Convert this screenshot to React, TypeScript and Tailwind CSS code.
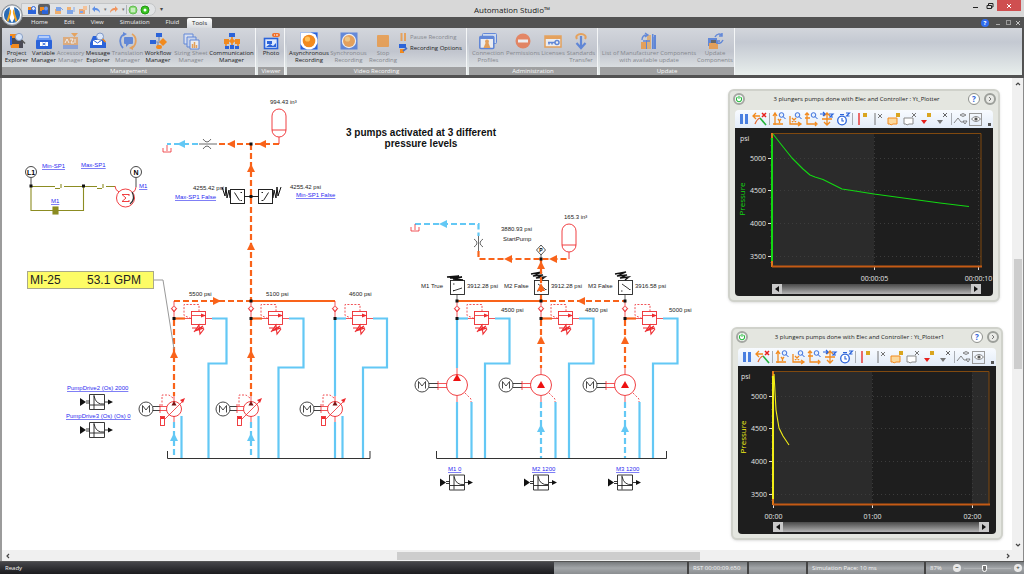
import React from "react";

const BLUE = "#2b63d9";
const ORANGE = "#f28a1e";
const HOT = "#f9631a";
const COLD = "#63c8f5";
const RED = "#ee2a2e";

/* ------------------------------------------------------------------ */
/* Ribbon icons                                                        */
/* ------------------------------------------------------------------ */

const ribbonIcons: Record<string, React.ReactNode> = {
  project: (
    <>
      <path d="M2 2h7v5H2z" fill={ORANGE} />
      <path d="M2 6h6l1 2h6v8H3z" fill="#4a4a55" />
      <path d="M3 12h8v4H3z" fill={ORANGE} />
      <path d="M2 4h2v9H2z" fill={BLUE} />
      <circle cx="11" cy="5" r="3.6" fill="#d5e4fa" stroke="#8aa0c4" />
      <path d="M13.500 8l3.500 3.500" stroke="#555" strokeWidth="1.600" />
    </>
  ),
  variable: (
    <>
      <path d="M3 3h12l2 6H1z" fill="#6c9bf2" />
      <rect x="1" y="8" width="16" height="9" rx="1" fill={BLUE} />
      <path d="M4 5h10" stroke="#fff" />
      <rect x="5" y="10" width="8" height="4" fill="#fff" />
      <path d="M7.500 11l3 2m0-2l-3 2" stroke={BLUE} strokeWidth="0.900" />
    </>
  ),
  accessory: (
    <>
      <path d="M9 1h7l-3.500 4z" fill={ORANGE} />
      <rect x="1" y="5" width="15" height="12" fill="#e79a50" />
      <rect x="1" y="13" width="15" height="4" fill="#7090d8" />
      <path d="M3 11l2-4 2 4M8 7h3l-2 4h3M13 7v4" fill="none" stroke="#fff" />
    </>
  ),
  message: (
    <>
      <path d="M4 4h9l4 7v5H1v-5z" fill={BLUE} />
      <path d="M4 8h9v5H4z" fill="#fff" />
      <path d="M4 8l4.500 3L13 8" stroke={BLUE} fill="none" />
      <circle cx="11" cy="4.500" r="3.500" fill="#dce8fb" stroke="#7f98c6" />
      <path d="M13.500 7l3 3" stroke={ORANGE} strokeWidth="1.600" />
    </>
  ),
  translation: (
    <>
      <rect x="5" y="5" width="9" height="7" rx="1" fill={BLUE} />
      <path d="M7 12v3l3-3" fill={BLUE} />
      <path d="M6 2C0 4 0 12 4 16" stroke={BLUE} strokeWidth="1.800" fill="none" />
      <path d="M4 0l4 2-4 2.500z" fill={BLUE} />
      <path d="M13 2c5 3 5 10 0 14" stroke={ORANGE} strokeWidth="1.800" fill="none" />
      <path d="M14 13.500l-4 2.500 4 2z" fill={ORANGE} />
    </>
  ),
  workflow: (
    <>
      <path d="M10 4v5M4 10h9M9 10v5" stroke="#7b8fb8" strokeWidth="1.200" fill="none" />
      <rect x="7" y="1" width="6" height="4" fill={BLUE} />
      <rect x="1" y="8" width="6" height="4" fill={BLUE} />
      <path d="M14 6l4 4-4 4-4-4z" fill={ORANGE} />
      <rect x="7" y="13" width="6" height="4" rx="2" fill={ORANGE} />
    </>
  ),
  sizing: (
    <>
      <path d="M2 2h9v10H2z" fill="#dfe8fb" stroke={BLUE} />
      <path d="M5 5h9v10H5z" fill="#c8d8f8" stroke={BLUE} />
      <path d="M8 8h9v9H8z" fill="#fff" stroke={BLUE} />
      <path d="M10.500 16v-4M12.500 16v-6M14.500 16v-3" stroke={ORANGE} strokeWidth="1.500" />
    </>
  ),
  communication: (
    <>
      <path d="M9 3v6M3 9h12M3 9v6M15 9v6M9 9v6" stroke={ORANGE} strokeWidth="1.600" fill="none" />
      <rect x="6" y="1" width="6" height="4" fill={BLUE} />
      <path d="M1 7h5v5H1zM12 7h5v5h-5z" fill={ORANGE} />
      <circle cx="9" cy="9" r="2.200" fill={ORANGE} />
      <path d="M2 14h4v3H2zM7 13h4v4H7zM12 14h4v3h-4z" fill={BLUE} />
    </>
  ),
  photo: (
    <>
      <rect x="2.500" y="6.500" width="13" height="10" fill="#dfeafd" stroke={BLUE} strokeWidth="1.600" />
      <path d="M5 9h5v3H5zM4 15l4-3 3 2 3-3v4z" fill={BLUE} />
      <rect x="10" y="1" width="8" height="4" rx="2" fill="#f0702a" />
      <path d="M12 3h1M14 3h2" stroke="#fff" />
    </>
  ),
  async: (
    <>
      <rect x="0.500" y="0.500" width="17" height="17" fill="#fff" stroke="#a9c2ee" />
      <path d="M17.500 .5v7l-2-5-5-2zM17.500 11v6.500H11l4-2zM.5 12v5.500H7l-4-2z" fill={BLUE} />
      <circle cx="9" cy="9" r="6.300" fill={ORANGE} />
      <circle cx="7.500" cy="7" r="2.600" fill="#ffc25c" />
    </>
  ),
  sync: (
    <>
      <rect x="0.500" y="0.500" width="17" height="17" fill={BLUE} />
      <circle cx="9" cy="9" r="7.200" fill="#fff" />
      <circle cx="9" cy="9" r="6" fill={ORANGE} />
      <circle cx="7.500" cy="7" r="2.600" fill="#ffc25c" />
    </>
  ),
  stop: <rect x="3" y="3" width="12" height="12" rx="1" fill={ORANGE} />,
  profiles: (
    <>
      <rect x="3.500" y="1.500" width="14" height="10" rx="1" fill="#cfe0fb" stroke={BLUE} />
      <rect x="0.800" y="4.500" width="14" height="12" rx="1" fill="#fff" stroke={BLUE} strokeWidth="1.600" />
      <path d="M1 4h14v3H1z" fill={BLUE} />
      <circle cx="8" cy="9.500" r="2" fill={ORANGE} />
      <path d="M6.500 11h3l2 5h-7z" fill={ORANGE} />
    </>
  ),
  permissions: (
    <>
      <circle cx="9" cy="9" r="7.500" fill="#f0602a" />
      <rect x="4" y="7.500" width="10" height="3" fill="#fff" />
    </>
  ),
  licenses: (
    <>
      <rect x="1" y="4" width="16" height="11" fill="#fff" stroke={ORANGE} strokeWidth="1.500" />
      <path d="M1 4h16v3H1z" fill={ORANGE} />
      <circle cx="13" cy="10.500" r="2" fill="none" stroke={BLUE} strokeWidth="1.500" />
      <path d="M11 10.500H4M5 10.500v2M8 10.500v2" stroke={BLUE} strokeWidth="1.500" />
    </>
  ),
  transfer: (
    <>
      <path d="M5 7C3 4 6 2 9 2s6 2 4 5" fill="none" stroke={ORANGE} strokeWidth="2" />
      <path d="M9 4v12M4.500 11l4.500 5 4.500-5" fill="none" stroke={BLUE} strokeWidth="2.200" />
    </>
  ),
  manufacturer: (
    <>
      <path d="M1 10h6v7H1z" fill={ORANGE} />
      <path d="M6 8h5v9H6zM12 2h1.500v15H12zM14 3h2v14h-2z" fill={BLUE} />
      <path d="M7 3h4v14H7z" fill="#e7a049" />
      <path d="M2 8c0-4 2-5 5-5M5 1l3 2-3 2M13 5v12M10 9H3" stroke={BLUE} strokeWidth="1.300" fill="none" />
    </>
  ),
  update: (
    <>
      <path d="M2 6h9v8H2z" fill={BLUE} />
      <path d="M3 11h9v6H3z" fill={ORANGE} />
      <path d="M5 8h5v3H5z" fill="#333" />
      <path d="M9 5c2-4 5-3 7-2M16 1v3h-3M17 8c-2 4-5 4-6 2M11 12V9h3" stroke={BLUE} strokeWidth="1.500" fill="none" />
    </>
  ),
};

function RibbonButton({
  icon,
  lines,
  disabled,
  width,
}: {
  icon: string;
  lines: string[];
  disabled?: boolean;
  width: string;
}) {
  return (
    <button
      type="button"
      disabled={disabled}
      className={`flex shrink-0 flex-col items-center whitespace-nowrap ${width} ${
        disabled ? "text-[#85888e]" : "font-medium text-[#1c1c1c]"
      }`}
    >
      <svg viewBox="0 0 18 18" className={`h-[18px] w-[18px] ${disabled ? "opacity-65" : ""}`} aria-hidden="true">
        {ribbonIcons[icon]}
      </svg>
      {lines.map((line) => (
        <span key={line} className="block leading-[7px]">
          {line}
        </span>
      ))}
    </button>
  );
}

function RibbonGroup({ title, children }: { title: string; children: React.ReactNode }) {
  return (
    <section className="mr-[2px] flex flex-col border-r border-[#f4f6f7] bg-linear-to-b from-[#d3d6dc] via-[#c1c5ce] to-[#e6eaea]">
      <div className="flex flex-1 items-start px-px pt-1">{children}</div>
      <h2 className="bg-[#9fa0a1] text-center leading-[8px] font-medium text-[#f8f8f8]">{title}</h2>
    </section>
  );
}

/* ------------------------------------------------------------------ */
/* Title bar, tabs and ribbon                                          */
/* ------------------------------------------------------------------ */

function QuickIcon({ label, children, active }: { label: string; children: React.ReactNode; active?: boolean }) {
  return (
    <button
      type="button"
      aria-label={label}
      className={`flex h-[11px] w-3 items-center justify-center ${active ? "rounded-xs bg-[#5d5f63]" : ""}`}
    >
      <svg viewBox="0 0 10 10" className="h-[10px] w-[10px]" aria-hidden="true">
        {children}
      </svg>
    </button>
  );
}

function TitleBar() {
  return (
    <header className="relative flex h-[17px] shrink-0 justify-between bg-[#d8d8d8]">
      <div className="flex items-start pt-[3px] pl-[21px]">
        <div className="flex h-[13px] items-center rounded-r-full border border-[#c3c5c7] bg-[#e1e3e5] pr-1 pl-1">
          <QuickIcon label="Project Explorer">
            <path d="M1 2h4v3H1z" fill={ORANGE} />
            <path d="M1 5h8v4H1z" fill={BLUE} />
            <circle cx="6.500" cy="3.500" r="2" fill="#dce8fb" stroke={BLUE} />
          </QuickIcon>
          <QuickIcon label="Component library" active>
            <path d="M1 2h4v4H1z" fill={ORANGE} />
            <path d="M3 5h6v4H3z" fill={BLUE} />
            <circle cx="7" cy="3.500" r="2" fill="#6f9cf0" />
          </QuickIcon>
          <span className="w-[3px]" />
          <QuickIcon label="New">
            <path d="M1 4h6v5H1z" fill="#f0b070" />
            <path d="M2 2h5v4H2z" fill="#7ea5e8" />
            <path d="M7 3l2 2" stroke="#7ea5e8" />
          </QuickIcon>
          <QuickIcon label="Open">
            <path d="M1 5h6v4H1z" fill="#7ea5e8" />
            <path d="M1 2h4v3H1z" fill="#f0b070" />
            <path d="M8 2v5" stroke="#7ea5e8" />
          </QuickIcon>
          <QuickIcon label="Save">
            <path d="M1 4h6v5H1z" fill="#e9a878" />
            <path d="M5 1h4v4H5z" fill="#f4c39a" />
            <path d="M2 6h3v2H2z" fill="#7ea5e8" />
          </QuickIcon>
          <span className="h-[9px] w-px bg-[#b0b2b5]" />
          <QuickIcon label="Undo">
            <path d="M4 1L1 4l3 3V5c2 0 4 1 5 3 0-3-2-5-5-5z" fill="#5d8fe6" />
          </QuickIcon>
          <span className="w-[6px] text-center text-[5px] leading-none text-[#777]">▾</span>
          <QuickIcon label="Redo">
            <path d="M6 1l3 3-3 3V5C4 5 2 6 1 8c0-3 2-5 5-5z" fill="#f0935c" />
          </QuickIcon>
          <span className="w-[6px] text-center text-[5px] leading-none text-[#777]">▾</span>
          <span className="h-[9px] w-px bg-[#b0b2b5]" />
          <QuickIcon label="Run">
            <circle cx="5" cy="5" r="4" fill="#8fdc7c" stroke="#62bc50" />
            <path d="M4 3v4M6 3v4" stroke="#fff" />
          </QuickIcon>
          <QuickIcon label="Stop">
            <circle cx="5" cy="5" r="4" fill="#39c422" stroke="#219a10" />
            <circle cx="5" cy="5" r="1.500" fill="#fff" />
          </QuickIcon>
        </div>
        <span className="ml-1 text-[6px] leading-[12px] text-[#444]">▾</span>
      </div>
      <h1 className="pointer-events-none absolute inset-x-0 top-[4px] text-center text-[8px] leading-[12px] text-[#222]">
        Automation Studio™
      </h1>
      <div className="flex h-[11px] items-stretch pr-[3px]">
        <button type="button" aria-label="Minimize" className="flex w-[13px] items-center justify-center">
          <span className="mt-1 h-px w-[5px] bg-[#222]" />
        </button>
        <button type="button" aria-label="Restore" className="flex w-[15px] items-center justify-center">
          <svg viewBox="0 0 8 8" className="h-2 w-2" aria-hidden="true">
            <path d="M1 3.500h4.500v3H1zM2.500 3V1.500H7v3.500H5.500" fill="none" stroke="#222" />
          </svg>
        </button>
        <button type="button" aria-label="Close" className="flex w-[24px] items-center justify-center bg-[#cf4f50]">
          <svg viewBox="0 0 6 6" className="h-[6px] w-[6px]" aria-hidden="true">
            <path d="M1 1l4 4M5 1L1 5" stroke="#fff" />
          </svg>
        </button>
      </div>
      <svg viewBox="0 0 22 22" className="absolute top-[4px] left-[1px] z-10 h-[22px] w-[22px]" aria-hidden="true">
        <circle cx="11" cy="11" r="10.300" fill="#c9ced4" stroke="#8d9298" />
        <circle cx="11" cy="11" r="8.600" fill="#2c6cb4" stroke="#fff" />
        <path d="M11 3l2 0 1 10-3 6-3-6 1-10z" fill="#fff" />
        <path d="M9.500 5L5.500 17l2 .8L10.500 8zM12.500 5l4 12-2 .8L11.500 8z" fill="#f4a823" />
        <path d="M11 5v12" stroke="#fff" strokeWidth="1.400" />
      </svg>
    </header>
  );
}

function TabBar() {
  const tabs = ["Home", "Edit", "View", "Simulation", "Fluid"];
  return (
    <nav className="flex h-[11px] shrink-0 items-stretch justify-between bg-[#525252] pr-[1px] pl-[23px]">
      <div className="flex items-stretch">
        {tabs.map((tab) => (
          <button key={tab} type="button" className="px-2 font-medium leading-[11px] text-[#efefef]">
            {tab}
          </button>
        ))}
        <button
          type="button"
          className="mt-px rounded-t-xs bg-linear-to-b from-white to-[#d7dade] px-[5px] font-medium leading-[10px] text-[#222]"
        >
          Tools
        </button>
      </div>
      <div className="flex items-center">
        <button
          type="button"
          aria-label="Help"
          className="mr-1 flex h-2 w-2 items-center justify-center rounded-full bg-[#2f6df0] leading-none font-bold text-white"
        >
          ?
        </button>
        <button type="button" aria-label="Minimize document" className="flex w-[10px] justify-center">
          <span className="mt-1 h-px w-1 bg-[#aaa]" />
        </button>
        <button type="button" aria-label="Restore document" className="flex w-[10px] justify-center">
          <span className="h-[5px] w-[5px] border border-[#9a9a9a]" />
        </button>
        <button type="button" aria-label="Close document" className="flex w-[10px] justify-center">
          <svg viewBox="0 0 6 6" className="h-[6px] w-[6px]" aria-hidden="true">
            <path d="M1 1l4 4M5 1L1 5" stroke="#c4c4c4" />
          </svg>
        </button>
      </div>
    </nav>
  );
}

function Ribbon() {
  return (
    <div className="flex h-[50px] shrink-0 border-x-2 border-b-3 border-[#525252] bg-linear-to-b from-[#d3d6dc] via-[#c4c9d2] via-30% to-[#e8eeec]">
      <RibbonGroup title="Management">
        <RibbonButton icon="project" lines={["Project", "Explorer"]} width="w-[27px]" />
        <RibbonButton icon="variable" lines={["Variable", "Manager"]} width="w-[27px]" />
        <RibbonButton icon="accessory" lines={["Accessory", "Manager"]} width="w-[27px]" disabled />
        <RibbonButton icon="message" lines={["Message", "Explorer"]} width="w-[28px]" />
        <RibbonButton icon="translation" lines={["Translation", "Manager"]} width="w-[31px]" disabled />
        <RibbonButton icon="workflow" lines={["Workflow", "Manager"]} width="w-[30px]" />
        <RibbonButton icon="sizing" lines={["Sizing Sheet", "Manager"]} width="w-[36px]" disabled />
        <RibbonButton icon="communication" lines={["Communication", "Manager"]} width="w-[45px]" />
      </RibbonGroup>
      <RibbonGroup title="Viewer">
        <RibbonButton icon="photo" lines={["Photo"]} width="w-[24px]" />
      </RibbonGroup>
      <RibbonGroup title="Video Recording">
        <RibbonButton icon="async" lines={["Asynchronous", "Recording"]} width="w-[42px]" />
        <RibbonButton icon="sync" lines={["Synchronous", "Recording"]} width="w-[37px]" disabled />
        <RibbonButton icon="stop" lines={["Stop", "Recording"]} width="w-[32px]" disabled />
        <div className="flex w-[66px] flex-col">
          <button type="button" disabled className="flex h-[10px] items-center gap-[3px] whitespace-nowrap text-[#85888e]">
            <svg viewBox="0 0 8 8" className="h-2 w-2 opacity-65" aria-hidden="true">
              <path d="M1.500 0h2v8h-2zM5 0h2v8H5z" fill={ORANGE} />
            </svg>
            Pause Recording
          </button>
          <button type="button" className="flex h-[12px] items-center gap-[2px] whitespace-nowrap font-medium text-[#1c1c1c]">
            <svg viewBox="0 0 9 9" className="h-[9px] w-[9px]" aria-hidden="true">
              <path d="M0 0h7v4H0z" fill={BLUE} />
              <path d="M1 5h4v4H1z" fill={ORANGE} />
              <path d="M4 7l4-3" stroke="#4a6fc0" strokeWidth="1.600" />
            </svg>
            Recording Options
          </button>
        </div>
      </RibbonGroup>
      <RibbonGroup title="Administration">
        <RibbonButton icon="profiles" lines={["Connection", "Profiles"]} width="w-[36px]" disabled />
        <RibbonButton icon="permissions" lines={["Permissions"]} width="w-[34px]" disabled />
        <RibbonButton icon="licenses" lines={["Licenses"]} width="w-[26px]" disabled />
        <RibbonButton icon="transfer" lines={["Standards", "Transfer"]} width="w-[30px]" disabled />
      </RibbonGroup>
      <RibbonGroup title="Update">
        <RibbonButton
          icon="manufacturer"
          lines={["List of Manufacturer Components", "with available update"]}
          width="w-[96px]"
          disabled
        />
        <RibbonButton icon="update" lines={["Update", "Components"]} width="w-[36px]" disabled />
      </RibbonGroup>
    </div>
  );
}

/* ------------------------------------------------------------------ */
/* Hydraulic diagram                                                   */
/* ------------------------------------------------------------------ */

type LineProps = { d: string; color?: string; dashed?: boolean };

function Pipe({ d, color = HOT, dashed }: LineProps) {
  return <path d={d} fill="none" stroke={color} strokeWidth="2.200" strokeDasharray={dashed ? "6 3" : undefined} />;
}

function Thin({ d, color = RED, dashed }: LineProps) {
  return <path d={d} fill="none" stroke={color} strokeWidth="0.800" strokeDasharray={dashed ? "2 1.500" : undefined} />;
}

function Arrow({ x, y, dir, color = HOT }: { x: number; y: number; dir: "up" | "left" | "right"; color?: string }) {
  const d =
    dir === "up"
      ? `M${x - 4} ${y + 4}h8l-4-8z`
      : dir === "left"
        ? `M${x + 4} ${y - 4}v8l-8-4z`
        : `M${x - 4} ${y - 4}v8l8-4z`;
  return <path d={d} fill={color} />;
}

function Node({ x, y }: { x: number; y: number }) {
  return <rect x={x - 1.5} y={y - 1.5} width="3" height="3" fill="#111" />;
}

function Label({ x, y, children }: { x: number; y: number; children: string }) {
  return (
    <text x={x} y={y} fontSize="6" fill="#222">
      {children}
    </text>
  );
}

function TagLink({ x, y, children }: { x: number; y: number; children: string }) {
  return (
    <a href="#tag">
      <text x={x} y={y} fontSize="6" fill="#2a2af0" textDecoration="underline">
        {children}
      </text>
    </a>
  );
}

function Drain({ x, y }: { x: number; y: number }) {
  return <Thin d={`M${x} ${y}v6M${x - 4} ${y + 3}v4h8v-4`} />;
}

function Accumulator({ x, y }: { x: number; y: number }) {
  return (
    <g fill="#fff" stroke={RED} strokeWidth="0.900">
      <rect x={x - 7} y={y} width="14" height="28" rx="7" />
      <path d={`M${x - 7} ${y + 21}h14M${x} ${y + 28}v7`} />
    </g>
  );
}

function Motor({ x, y }: { x: number; y: number }) {
  return (
    <g fill="none" stroke="#333" strokeWidth="0.900">
      <circle cx={x} cy={y} r="7" />
      <path d={`M${x - 3.5} ${y + 3.5}v-7l3.500 4.500 3.500-4.500v7`} />
    </g>
  );
}

function ReliefValve({ x, coldInlet, coldPath }: { x: number; coldInlet?: boolean; coldPath: string }) {
  return (
    <g>
      <Thin d={`M${x} 301v5M${x} 311v8`} />
      <circle cx={x} cy="308.500" r="2" fill="#fff" stroke={RED} strokeWidth="0.800" />
      <Thin d={`M${x - 3} 308l3 4 3-4`} />
      <Pipe d={coldPath} color={COLD} />
      <Pipe d={`M${x} 318.500h11`} color={coldInlet ? COLD : HOT} />
      <Thin d={`M${x + 11} 318.500h7M${x + 32} 318.500h6`} />
      <Thin d={`M${x + 17} 318.500l-7-3v-11h15v7`} dashed />
      <rect x={x + 17.5} y="311.500" width="14" height="13" fill="#fff" stroke={RED} strokeWidth="0.900" />
      <Thin d={`M${x + 18} 315.500h13`} />
      <path d={`M${x + 27} 313.500v4l5-2z`} fill={RED} />
      <path
        d={`M${x + 18} 328h12l-9 3 8-5M${x + 20} 332l5-7 1 9 4-5`}
        fill="none"
        stroke={RED}
        strokeWidth="1.100"
      />
      <Node x={x} y={318.500} />
    </g>
  );
}

function VariablePump({ x, cold }: { x: number; cold?: boolean }) {
  return (
    <g>
      <Pipe d={`M${x} 320v76`} color={cold ? COLD : HOT} dashed={!cold} />
      <Pipe d={`M${x} 422v36`} color={COLD} dashed={!cold} />
      <Pipe d={`M${x + 7.5} 416v42`} color={COLD} />
      {!cold && <Arrow x={x} y={354} dir="up" />}
      {!cold && <Arrow x={x} y={437} dir="up" color={COLD} />}
      <Motor x={x - 28} y={409} />
      <Thin d={`M${x - 21} 406.500h7M${x - 21} 410.500h7`} color="#111" />
      <Thin d={`M${x - 14} 406.500h7M${x - 14} 410.500h7M${x - 14} 404v9`} />
      <circle cx={x} cy="409" r="7.500" fill="#fff" stroke={RED} strokeWidth="0.900" />
      <Thin d={`M${x} 396v6M${x} 416v6M${x - 11} 421l20-20`} />
      <path d={`M${x + 11} 398l-5 2 3 3z`} fill={RED} />
      <path d={`M${x - 2.5} 405.500h5l-2.500-4.500z`} fill="#7a1010" />
      <Thin d={`M${x - 12} 406v-11h7l4 3`} dashed />
      <rect x={x - 13.5} y="416.500" width="4" height="9" fill="#fff" stroke={RED} strokeWidth="0.900" />
      <path d={`M${x - 13} 418h3`} stroke={RED} strokeWidth="2" />
    </g>
  );
}

function FixedPump({ x, cold }: { x: number; cold?: boolean }) {
  return (
    <g>
      <Pipe d={`M${x} 320v48`} color={cold ? COLD : HOT} dashed={!cold} />
      <Pipe d={`M${x} 402v56`} color={COLD} dashed={!cold} />
      <Pipe d={`M${x + 14.5} 402v56`} color={COLD} />
      {!cold && <Arrow x={x} y={340} dir="up" />}
      {!cold && <Arrow x={x} y={428} dir="up" color={COLD} />}
      <Motor x={x - 35} y={385} />
      <Thin d={`M${x - 28} 383.500h9M${x - 28} 387.500h9`} color="#111" />
      <Thin d={`M${x - 19} 383.500h9M${x - 19} 387.500h9M${x - 19} 381v9`} />
      <circle cx={x} cy="385" r="10.500" fill="#fff" stroke={RED} strokeWidth="0.900" />
      <Thin d={`M${x} 368v6M${x} 396v6`} />
      <Thin d={`M${x + 8} 393l6 6v3`} dashed />
      <path d={cold ? `M${x - 4} 381h8l-4-7z` : `M${x - 4} 388h8l-4-7z`} fill="#ee1111" />
    </g>
  );
}

function Drive({ x, y }: { x: number; y: number }) {
  return (
    <g>
      <path d={`M${x - 17} ${y - 4}v8l6-4zM${x + 11} ${y - 2.5}v5l5-2.500z`} fill="#111" />
      <path
        d={`M${x - 11} ${y - 1}h4M${x - 11} ${y + 1}h4M${x + 8} ${y}h3M${x - 7.5} ${y - 7.5}h15v15h-15zM${x - 7} ${y + 3}h14M${x - 3} ${y - 7}v14M${x - 3} ${y - 6}q2 9 10 8`}
        fill="none"
        stroke="#222"
        strokeWidth="0.900"
      />
    </g>
  );
}

function SwitchBox({ x, y, flip }: { x: number; y: number; flip?: boolean }) {
  return (
    <g stroke="#222" strokeWidth="1" fill="none">
      <rect x={x} y={y} width="14" height="14" fill="#fff" />
      <path
        d={
          flip
            ? `M${x + 5} ${y + 11}l5-8M${x + 3} ${y + 3}h1.500M${x + 3} ${y + 11}h1.500`
            : `M${x + 4} ${y + 3}l5 8M${x + 10} ${y + 3}h1.500M${x + 10} ${y + 11}h1.500`
        }
      />
    </g>
  );
}

function TopSwitch({ x, closed }: { x: number; closed?: boolean }) {
  return (
    <g stroke="#222" strokeWidth="0.900" fill="none">
      <rect x={x - 6.500} y="280.500" width="14" height="14" fill="#fff" />
      <path
        d={
          closed
            ? `M${x - 4} 291l9-3M${x - 4} 284h1.500M${x - 4} 290.500h1.500`
            : `M${x - 3} 284l7 5M${x - 4} 291h1.500M${x + 4} 289.500h1.500`
        }
      />
      <path
        d={closed ? `M${x - 10} 277l12-1-9 2 12-1-9 2 10 1` : `M${x - 10} 274l11-2-9 4 10-1-7 3 9-1-4 3`}
        stroke="#111"
        strokeWidth="1.300"
      />
      <path d={`M${x} 295v6`} stroke="#555" />
    </g>
  );
}

function Diagram() {
  return (
    <svg
      viewBox="0 78 1011 472"
      width="1011"
      height="472"
      className="block max-w-none font-['Liberation_Sans',sans-serif]"
      role="img"
      aria-label="Hydraulic and electrical circuit"
    >
      {/* Electrical control loop */}
      <g fill="none" stroke="#8c8c22" strokeWidth="1.100">
        <path d="M31 186.500h24M64 186.500h33M106 186.500h9M31 186v24.500h22M58 210.500h25.500v-24M55 188.500h5M61 184v4M97 188.500h5M103 184v4" />
        <rect x="53" y="207" width="5" height="7" fill="#8c8c22" />
      </g>
      <g fill="none" stroke="#333" strokeWidth="0.900">
        <circle cx="31" cy="172" r="5.500" />
        <circle cx="136" cy="172" r="5.500" />
        <path d="M31 178v8M136 178v9" />
      </g>
      <text x="31" y="174.500" fontSize="7" fontWeight="bold" textAnchor="middle">L1</text>
      <text x="136" y="174.500" fontSize="7" fontWeight="bold" textAnchor="middle">N</text>
      <Node x={31} y={186} />
      <Node x={83.500} y={186} />
      <g fill="none" stroke={RED} strokeWidth="0.900">
        <circle cx="125.500" cy="198" r="9" />
        <path d="M115 186q0 4 4 6M136 187q0 4-4 6M129 194.500h-7l4 3.500-4 3.500h7M129 194v2M129 200v2" />
      </g>
      <path d="M132 192q4 7-2 12" fill="none" stroke="#333" strokeWidth="1.200" />
      <TagLink x={42} y={168}>Min-SP1</TagLink>
      <TagLink x={81} y={167}>Max-SP1</TagLink>
      <TagLink x={51} y={203}>M1</TagLink>
      <TagLink x={139} y={188}>M1</TagLink>

      {/* Left power unit */}
      <Label x={270} y={104}>994.43 in³</Label>
      <Pipe d="M279 144h-62" dashed />
      <Pipe d="M198 144h-31" color={COLD} dashed />
      <Accumulator x={279} y={109} />
      <Drain x={167} y={145} />
      <Thin d="M199 144h18M203 139q4 6 8 0M203 149q4-6 8 0" color="#444" />
      <Arrow x={262} y={144} dir="left" />
      <Arrow x={231} y={144} dir="left" />
      <Arrow x={181} y={144} dir="left" color={COLD} />
      <Pipe d="M251 144v157" dashed />
      <Arrow x={251} y={168} dir="up" />
      <Arrow x={251} y={246} dir="up" />
      <path d="M244 196.500h14" stroke="#222" />
      <SwitchBox x={230.500} y={189.500} />
      <SwitchBox x={258.500} y={189.500} flip />
      <g fill="none" stroke="#111">
        <path d="M222 187l3 9 1-9 1 11 2-8 1 8" />
        <path d="M281 187l-3 9-1-9-1 11-2-8-1 8" />
      </g>
      <Node x={251} y={144} />
      <Node x={251} y={196.500} />
      <Label x={193} y={190}>4255.42 psi</Label>
      <TagLink x={175} y={199}>Max-SP1 False</TagLink>
      <Label x={290} y={189}>4255.42 psi</Label>
      <TagLink x={296} y={197}>Min-SP1 False</TagLink>
      <Pipe d="M174 301h77" dashed />
      <Pipe d="M251 301h84" />
      <Arrow x={217} y={301} dir="right" />
      <Label x={189} y={296}>5500 psi</Label>
      <Label x={266} y={296}>5100 psi</Label>
      <Label x={349} y={296}>4600 psi</Label>
      <VariablePump x={174} />
      <VariablePump x={251} />
      <VariablePump x={335} cold />
      <ReliefValve x={174} coldPath="M212 318.500h14.500v45h-18v95" />
      <ReliefValve x={251} coldPath="M289 318.500h14.500v49h-25v91" />
      <ReliefValve x={335} coldInlet coldPath="M373 318.500h14v49h-24v91" />
      <Node x={251} y={301} />
      <path d="M167.500 451v7.500h202.500v-7.500" fill="none" stroke="#333" />

      {/* Flow reading */}
      <path d="M154 280h9l11 69" fill="none" stroke="#999" />
      <rect x="27.500" y="271.500" width="126" height="17" fill="#fdfc66" stroke="#aaa98a" />
      <text x="30" y="284" fontSize="12" fill="#222">MI-25</text>
      <text x="87" y="284" fontSize="12" fill="#222">53.1 GPM</text>

      <TagLink x={67} y={390}>PumpDrive2 (Os) 2000</TagLink>
      <Drive x={97} y={402} />
      <TagLink x={66} y={418}>PumpDrive3 (Os) (Os) 0</TagLink>
      <Drive x={97} y={430} />

      <g fontSize="10" fontWeight="bold" textAnchor="middle" fill="#111">
        <text x="421" y="136">3 pumps activated at 3 different</text>
        <text x="421" y="147">pressure levels</text>
      </g>

      {/* Right power unit */}
      <Label x={564} y={219}>165.3 in³</Label>
      <Label x={501} y={231}>3880.93 psi</Label>
      <Label x={503} y={241}>StartPump</Label>
      <Pipe d="M415 224h63.500v12" color={COLD} dashed />
      <Arrow x={443} y={224} dir="left" color={COLD} />
      <Drain x={415} y={224} />
      <Thin d="M478.500 236v16M474 239q6 4 0 8M483 239q-6 4 0 8" color="#444" />
      <Pipe d="M478.500 251v8h90.500" dashed />
      <Accumulator x={569} y={224} />
      <Arrow x={508} y={259} dir="left" />
      <Arrow x={553} y={259} dir="left" />
      <path d="M541 245l4.500 5-4.500 5-4.500-5zM541 255v4" fill="#fff" stroke="#444" strokeWidth="0.900" />
      <text x="541" y="252" fontSize="5" fontWeight="bold" textAnchor="middle">P</text>
      <TopSwitch x={457} closed />
      <TopSwitch x={541} />
      <TopSwitch x={625} />
      <Pipe d="M541 259v42" dashed />
      <Arrow x={541} y={265} dir="up" />
      <Arrow x={541} y={287} dir="up" />
      <Node x={541} y={259} />
      <Label x={421} y={288}>M1 True</Label>
      <Label x={467} y={288}>3912.28 psi</Label>
      <Label x={504} y={288}>M2 False</Label>
      <Label x={551} y={288}>3912.28 psi</Label>
      <Label x={588} y={288}>M3 False</Label>
      <Label x={635} y={288}>3916.58 psi</Label>
      <Pipe d="M457 301h84" />
      <Pipe d="M541 301h84" dashed />
      <Arrow x={581} y={301} dir="left" />
      <FixedPump x={457} cold />
      <FixedPump x={541} />
      <FixedPump x={625} />
      <ReliefValve x={457} coldInlet coldPath="M495 318.500h14.500v45h-24.500v95" />
      <ReliefValve x={541} coldPath="M579 318.500h14.500v45h-24.500v95" />
      <ReliefValve x={625} coldPath="M663 318.500h14.500v45h-24.500v95" />
      <Node x={457} y={301} />
      <Node x={541} y={301} />
      <Node x={625} y={301} />
      <Label x={501} y={312}>4500 psi</Label>
      <Label x={585} y={312}>4800 psi</Label>
      <Label x={669} y={312}>5000 psi</Label>
      <path d="M436.500 451v7.500h230v-7.500" fill="none" stroke="#333" />
      <TagLink x={448} y={471}>M1 0</TagLink>
      <Drive x={457} y={482.500} />
      <TagLink x={532} y={471}>M2 1200</TagLink>
      <Drive x={541} y={482.500} />
      <TagLink x={616} y={471}>M3 1200</TagLink>
      <Drive x={625} y={482.500} />
    </svg>
  );
}

/* ------------------------------------------------------------------ */
/* Plotter windows                                                     */
/* ------------------------------------------------------------------ */

const magnifier = (
  <>
    <circle cx="10.500" cy="4" r="2.300" fill="#e8f1fd" stroke={BLUE} strokeWidth="0.900" />
    <path d="M12 5.500l2.500 2.500" stroke={BLUE} />
  </>
);

const tools: { label: string; art: React.ReactNode }[][] = [
  [
    { label: "Pause", art: <path d="M4 3h3v10H4zM9 3h3v10H9z" fill="#4a7fe0" /> },
    {
      label: "Clear curve",
      art: (
        <>
          <path d="M1 5h7M4 2L1 5l3 3" stroke={ORANGE} strokeWidth="1.300" fill="none" />
          <path d="M10 2l4 4M14 2l-4 4" stroke="#e8201c" strokeWidth="1.500" />
          <path d="M8 7l6 7" stroke="#24b33a" strokeWidth="1.600" />
          <path d="M3 13q2-5 5-6" stroke="#e46a34" strokeWidth="1.300" fill="none" />
        </>
      ),
    },
  ],
  [
    {
      label: "Zoom Y axis",
      art: (
        <>
          <path d="M4 14V3M2 5l2-3 2 3M2 13h10M7 8l1.500 2L10 8M8.500 10v2" stroke={ORANGE} strokeWidth="1.300" fill="none" />
          {magnifier}
        </>
      ),
    },
    {
      label: "Zoom X axis",
      art: (
        <>
          <path d="M3 5v8h10M11 11l3 2-3 2M5 7l4 4M9 7l-4 4" stroke={ORANGE} strokeWidth="1.300" fill="none" />
          {magnifier}
        </>
      ),
    },
    {
      label: "Zoom both axes",
      art: (
        <>
          <path d="M4 2v11h9M2 4l2-2 2 2M12 11l2 2-2 2M2 7h5" stroke={ORANGE} strokeWidth="1.300" fill="none" />
          {magnifier}
        </>
      ),
    },
    {
      label: "Fit",
      art: (
        <>
          <path d="M3 8h10M8 2v12M5 5l3-3 3 3M5 11l3 3 3-3" stroke={ORANGE} strokeWidth="1.300" fill="none" />
          <path d="M1 3h5M4 1l2 2-2 2M10 3h4l-3 3h3" stroke={BLUE} strokeWidth="1.200" fill="none" />
        </>
      ),
    },
    {
      label: "Time base",
      art: (
        <>
          <circle cx="7" cy="9.500" r="4.300" fill="#fff" stroke={BLUE} strokeWidth="1.300" />
          <path d="M7 7v3h2M5 3.500h4M11 2h3.500l-3 3h3" stroke={BLUE} strokeWidth="1.100" fill="none" />
        </>
      ),
    },
  ],
  [
    {
      label: "Add cursor",
      art: (
        <>
          <path d="M5 2v12" stroke="#e8201c" strokeWidth="1.300" />
          <path d="M9 2h4v4H9z" fill="#d9a520" />
        </>
      ),
    },
    { label: "Remove cursor", art: <path d="M5 2v12M8 3l4 4M12 3L8 7" stroke="#666" strokeWidth="0.900" /> },
    {
      label: "Add note",
      art: (
        <>
          <path d="M2 7h9v6H7l-2 1-1-1H2z" fill="#fbd89c" stroke={ORANGE} />
          <path d="M10 2h4v4h-4z" fill="#d9a520" />
        </>
      ),
    },
    {
      label: "Remove note",
      art: (
        <>
          <path d="M2 7h9v6H7l-2 1-1-1H2z" fill="#fff" stroke="#8a8a8a" />
          <path d="M10 2l4 4M14 2l-4 4" stroke="#666" strokeWidth="0.900" />
        </>
      ),
    },
    {
      label: "Add marker",
      art: (
        <>
          <path d="M3 9h6l-3 4z" fill="#e8201c" />
          <path d="M9 2h4v4H9z" fill="#d9a520" />
        </>
      ),
    },
    {
      label: "Remove marker",
      art: (
        <>
          <path d="M3 9h6l-3 4z" fill="#777" />
          <path d="M9 2l4 4M13 2L9 6" stroke="#555" strokeWidth="0.900" />
        </>
      ),
    },
  ],
  [
    {
      label: "Curve visibility",
      art: (
        <path d="M1 12l4-5 3 4h3M7 4q3-3 6 0-3 3-6 0M10 3.500v1M10 10h4l-2 3z" stroke="#777" strokeWidth="0.900" fill="none" />
      ),
    },
  ],
];

type PlotSpec = {
  title: string;
  color: string;
  left: number;
  right: number;
  bands: { x: number; w: number }[];
  ticks: { x: number; label: string }[];
  points: string;
};

function Chart({ spec }: { spec: PlotSpec }) {
  const values = [
    { y: 30.5, v: "5000" },
    { y: 62.5, v: "4500" },
    { y: 95.5, v: "4000" },
    { y: 128.5, v: "3500" },
  ];
  const minor = Array.from({ length: 20 }, (_, i) => 11 + i * 6.5);
  return (
    <svg
      viewBox="0 0 258 156"
      className="block h-[156px] w-full font-['Open_Sans',sans-serif]"
      role="img"
      aria-label={`Pressure curve, ${spec.title}`}
    >
      {spec.bands.map((b) => (
        <rect key={b.x} x={b.x} y="5" width={b.w} height="134" fill="#2b2b2b" />
      ))}
      {values.map((v) => (
        <path key={v.v} d={`M${spec.left} ${v.y}H${spec.right}`} stroke="#3c3c3c" strokeDasharray="1 3" />
      ))}
      {spec.ticks.map((t) => (
        <path key={t.label} d={`M${t.x} 5v133`} stroke="#3c3c3c" strokeDasharray="1 3" />
      ))}
      <path d={`M${spec.left} 5.500H${spec.right}V138`} fill="none" stroke="#80490f" />
      {minor.map((y) => (
        <path key={y} d={`M${spec.left - 2} ${y}h2`} stroke="#666" strokeWidth="0.500" />
      ))}
      {values.map((v) => (
        <g key={v.v}>
          <path d={`M${spec.left - 4} ${v.y}h4`} stroke="#ddd" />
          <text x={spec.left - 6} y={v.y + 2.5} fontSize="7" textAnchor="end" fill="#e4e4e4">
            {v.v}
          </text>
        </g>
      ))}
      {spec.ticks.map((t) => (
        <g key={t.label}>
          <path d={`M${t.x} 138v4`} stroke="#ddd" />
          <text x={t.x} y="153" fontSize="7" textAnchor="middle" fill="#e4e4e4">
            {t.label}
          </text>
        </g>
      ))}
      <path d={`M${spec.left} 7v126`} stroke={spec.color} strokeWidth="2" />
      <path d={`M${spec.left} 5v5M${spec.left} 133v6`} stroke="#e07a18" strokeWidth="2" />
      <path d={`M${spec.left} 138.500H${spec.right + 1}`} stroke="#c45a14" strokeWidth="2" />
      <polyline points={spec.points} fill="none" stroke={spec.color} strokeWidth="1.100" strokeLinejoin="round" />
      <text x={spec.left - 32} y="13" fontSize="7" fill="#e4e4e4">
        psi
      </text>
      <text
        x={spec.left - 27}
        y="71"
        fontSize="8"
        textAnchor="middle"
        fill={spec.color}
        transform={`rotate(-90 ${spec.left - 27} 71)`}
      >
        Pressure
      </text>
    </svg>
  );
}

function ScrollArrow({ label, d }: { label: string; d: string }) {
  return (
    <button type="button" aria-label={label} className="flex w-[10px] items-center justify-center bg-[#c9c9c9]">
      <svg viewBox="0 0 6 6" className="h-[6px] w-[6px]" aria-hidden="true">
        <path d={d} fill="#111" />
      </svg>
    </button>
  );
}

function PlotWindow({ spec, place, scrollInset }: { spec: PlotSpec; place: string; scrollInset: string }) {
  return (
    <article
      className={`absolute w-[272px] rounded-md border-2 border-[#d0d2cb] bg-[#e4e6e0] px-[5px] pb-1 shadow-sm ${place}`}
    >
      <header className="flex h-[19px] items-center gap-1 pb-[3px]">
        <button
          type="button"
          aria-label="Power"
          className="ml-[-2px] flex h-3 w-3 items-center justify-center rounded-full border-2 border-[#a5a8a3] bg-white"
        >
          <svg viewBox="0 0 8 8" className="h-2 w-2" aria-hidden="true">
            <path d="M2.500 2a2.600 2.600 0 1 0 3 0M4 .8v3" stroke="#25b93c" fill="none" strokeWidth="1.100" />
          </svg>
        </button>
        <h2 className="flex-1 text-center text-[6px] leading-[8px] whitespace-nowrap text-[#222]">{spec.title}</h2>
        <button
          type="button"
          aria-label="Help"
          className="flex h-3 w-3 items-center justify-center rounded-full border border-[#8e918c] bg-white text-[8px] leading-none font-bold text-[#2b63d9]"
        >
          ?
        </button>
        <button
          type="button"
          aria-label="Expand"
          className="mr-[-3px] flex h-3 w-3 items-center justify-center rounded-full border-2 border-[#9c9f9a] bg-[#e9eae6]"
        >
          <svg viewBox="0 0 6 6" className="h-[6px] w-[6px]" aria-hidden="true">
            <path d="M2 1l2 2-2 2" stroke="#777" fill="none" />
          </svg>
        </button>
      </header>
      <div className="flex h-[18px] items-center rounded-t-sm bg-linear-to-b from-[#f8fbff] to-[#e3ecf8] pl-px">
        {tools.map((group, i) => (
          <React.Fragment key={group[0].label}>
            {i > 0 && <span className="mx-px h-3 w-px bg-[#a9adb3]" />}
            {group.map((t) => (
              <button key={t.label} type="button" aria-label={t.label} className="h-4 w-4">
                <svg viewBox="0 0 16 16" className="h-4 w-4" aria-hidden="true">
                  {t.art}
                </svg>
              </button>
            ))}
          </React.Fragment>
        ))}
        <button
          type="button"
          aria-label="Show legend"
          className="flex h-[13px] w-[13px] items-center justify-center border border-[#9a9a9a]"
        >
          <svg viewBox="0 0 10 10" className="h-[10px] w-[10px]" aria-hidden="true">
            <path d="M.5 5q4.500-5 9 0-4.500 5-9 0z" fill="#fff" stroke="#666" strokeWidth="0.800" />
            <circle cx="5" cy="5" r="1.600" fill="#555" />
          </svg>
        </button>
        <span className="mr-[2px] mb-[2px] ml-auto h-[3px] w-[3px] self-end bg-[#555]" />
      </div>
      <div className="rounded-b-sm bg-[#1e1e1e] pb-[2px]">
        <Chart spec={spec} />
        <div className={`flex h-[10px] ${scrollInset}`}>
          <ScrollArrow label="Scroll left" d="M5 0v6L1 3z" />
          <span className="flex-1 bg-linear-to-b from-[#4a4a4a] to-[#b4b4b4]" />
          <ScrollArrow label="Scroll right" d="M1 0v6l4-3z" />
        </div>
      </div>
    </article>
  );
}

const plots: PlotSpec[] = [
  {
    title: "3 plungers pumps done with Elec and Controller : Yt_Plotter",
    color: "#12d812",
    left: 37,
    right: 246,
    bands: [{ x: 37, w: 102 }],
    ticks: [
      { x: 139.5, label: "00:00:05" },
      { x: 243.5, label: "00:00:10" },
    ],
    points:
      "38,6 45,15 57,30 68,41 75,47 80,49 88,51.500 97,56 107,61 117,62.500 139,66 172,70.500 205,75 234,78.500",
  },
  {
    title: "3 plungers pumps done with Elec and Controller : Yt_Plotter1",
    color: "#f2ee16",
    left: 35,
    right: 251,
    bands: [
      { x: 35, w: 99 },
      { x: 234, w: 17 },
    ],
    ticks: [
      { x: 35.5, label: "00:00" },
      { x: 134.5, label: "01:00" },
      { x: 234.5, label: "02:00" },
    ],
    points: "36,8 38,44 41,62 45,70 51,79",
  },
];

/* ------------------------------------------------------------------ */
/* Workspace and status bar                                            */
/* ------------------------------------------------------------------ */

function Chevron({ label, d }: { label: string; d: string }) {
  return (
    <button type="button" aria-label={label} className="flex h-[11px] w-[11px] shrink-0 items-center justify-center">
      <svg viewBox="0 0 6 6" className="h-[6px] w-[6px]" aria-hidden="true">
        <path d={d} stroke="#444" strokeWidth="1.200" fill="none" />
      </svg>
    </button>
  );
}

function Workspace() {
  return (
    <main className="flex min-h-0 flex-1 flex-col border-r border-l-2 border-r-[#8a8a8a] border-l-[#9b9b9b] bg-[#f0f0f0]">
      <div className="flex min-h-0 flex-1">
        <div className="relative min-w-0 flex-1 overflow-hidden bg-white">
          <div className="-ml-[2px]">
            <Diagram />
          </div>
          <PlotWindow spec={plots[0]} place="left-[726px] top-[11px]" scrollInset="mr-[12px] ml-[37px]" />
          <PlotWindow spec={plots[1]} place="left-[729px] top-[249px]" scrollInset="mr-[7px] ml-[35px]" />
        </div>
        <div className="flex w-[11px] flex-col items-center">
          <Chevron label="Scroll up" d="M1 4l2-2 2 2" />
          <span className="h-[36%]" />
          <span className="w-2 flex-1 basis-0 bg-[#cdcdcd]" />
          <span className="h-[36%]" />
          <Chevron label="Scroll down" d="M1 2l2 2 2-2" />
        </div>
      </div>
      <div className="flex h-[11px] shrink-0 items-center pr-[10px]">
        <Chevron label="Scroll document left" d="M4 1L2 3l2 2" />
        <span className="w-[38%]" />
        <span className="h-2 w-[30%] bg-[#cdcdcd]" />
        <span className="flex-1" />
        <Chevron label="Scroll document right" d="M2 1l2 2-2 2" />
      </div>
    </main>
  );
}

function StatusBar() {
  const cell = "border-l-2 border-[#444] pl-1";
  return (
    <footer className="flex h-[13px] shrink-0 border-t border-[#555] bg-linear-to-b from-[#777a7d] via-[#a3a6a9] to-[#8b8e91] leading-[12px] text-[#f4f4f4]">
      <div className="flex-1 bg-linear-to-b from-[#46464a] to-[#1b1b1e] pl-[5px]">Ready</div>
      <div className="w-[133px]" />
      <div className={`w-[60px] ${cell}`}>RST 00:00:09.650</div>
      <div className={`w-[59px] ${cell}`} />
      <div className={`w-[118px] ${cell}`}>Simulation Pace: 10 ms</div>
      <div className={`flex w-[100px] items-center ${cell}`}>
        <span className="w-[23px]">87%</span>
        <button
          type="button"
          aria-label="Zoom out"
          className="flex h-2 w-2 items-center justify-center rounded-full bg-[#e8e8e8] leading-none font-bold text-[#444]"
        >
          −
        </button>
        <input
          type="range"
          aria-label="Zoom"
          defaultValue={42}
          className="mx-[3px] h-2 min-w-0 flex-1 appearance-none bg-linear-to-b from-transparent from-45% via-[#e0e0e0] via-45% to-transparent to-60% [&::-webkit-slider-thumb]:h-[7px] [&::-webkit-slider-thumb]:w-[5px] [&::-webkit-slider-thumb]:appearance-none [&::-webkit-slider-thumb]:rounded-b-full [&::-webkit-slider-thumb]:border [&::-webkit-slider-thumb]:border-white [&::-webkit-slider-thumb]:bg-[#777]"
        />
        <button
          type="button"
          aria-label="Zoom in"
          className="mr-[2px] flex h-2 w-2 items-center justify-center rounded-full bg-[#e8e8e8] leading-none font-bold text-[#444]"
        >
          +
        </button>
      </div>
    </footer>
  );
}

export default function App() {
  return (
    <div className="flex h-screen flex-col overflow-hidden bg-[#d8d8d8] font-['Open_Sans','Noto_Sans',sans-serif] text-[6px]">
      <TitleBar />
      <TabBar />
      <Ribbon />
      <Workspace />
      <StatusBar />
    </div>
  );
}
